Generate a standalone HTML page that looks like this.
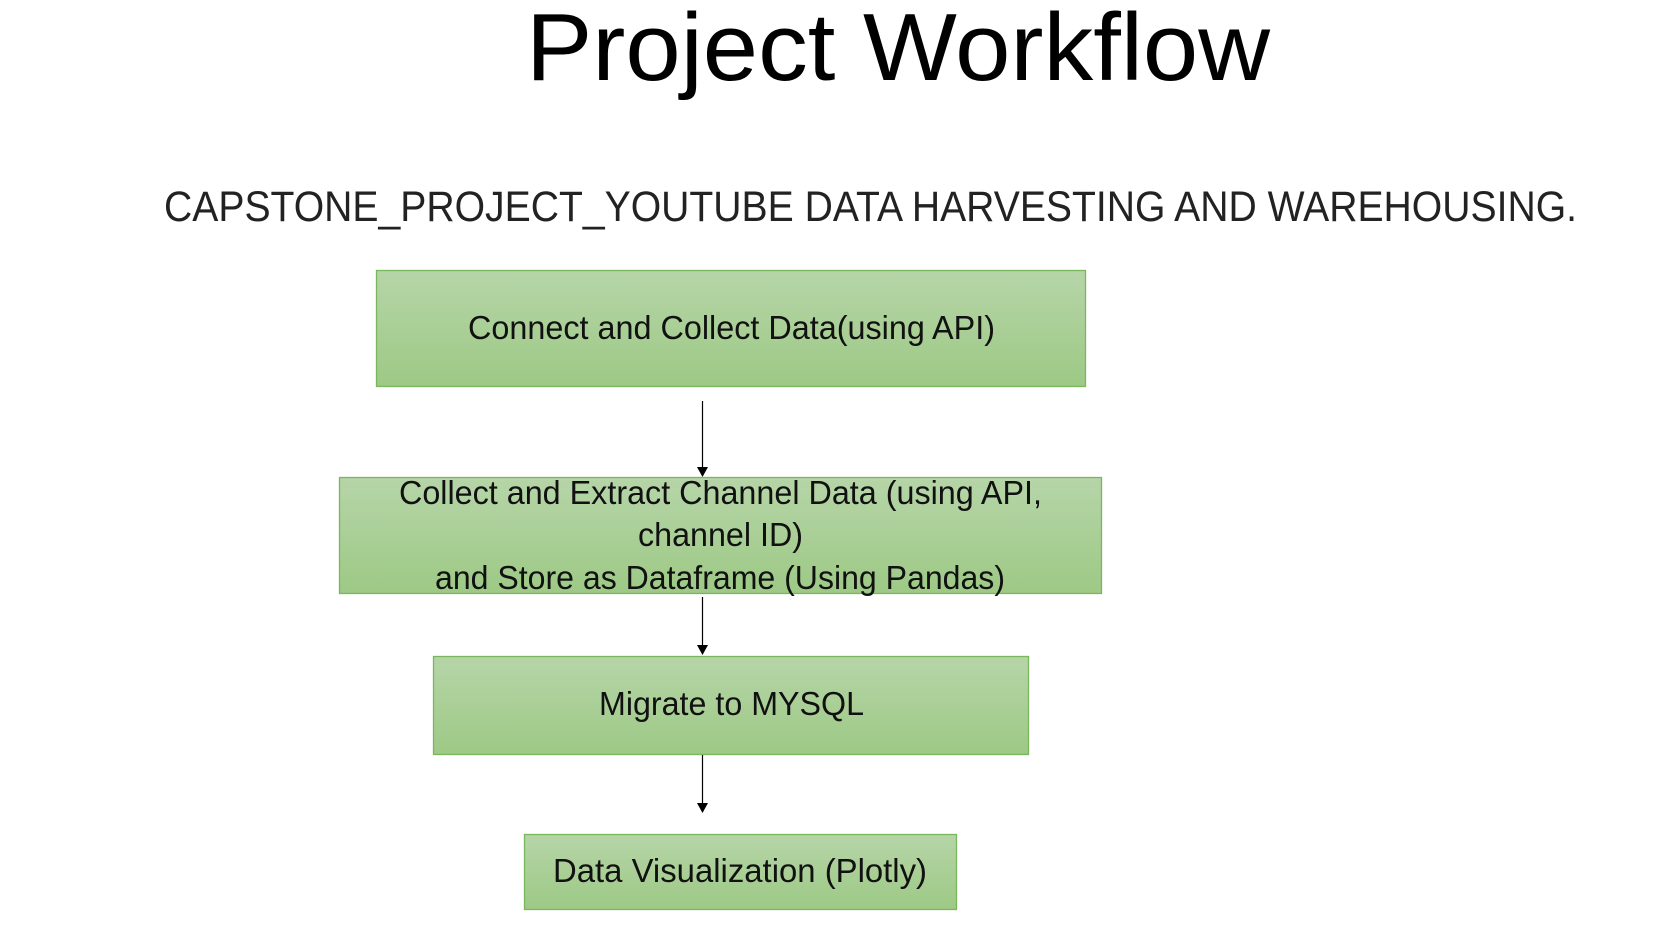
<!DOCTYPE html>
<html><head><meta charset="utf-8"><style>html,body{margin:0;padding:0;background:#fff;width:1677px;height:945px;overflow:hidden}</style></head>
<body>
<svg width="1677" height="945" viewBox="0 0 1677 945" xmlns="http://www.w3.org/2000/svg" font-family="Liberation Sans, sans-serif">
<defs>
<linearGradient id="g" x1="0" y1="0" x2="0" y2="1"><stop offset="0" stop-color="#b6d5a8"/><stop offset="1" stop-color="#9dc985"/></linearGradient>
</defs>
<text x="526" y="80" font-size="96" textLength="744" lengthAdjust="spacingAndGlyphs" fill="#000">Project Workflow</text>
<text x="164" y="221" font-size="43" textLength="1413" lengthAdjust="spacingAndGlyphs" fill="#222">CAPSTONE_PROJECT_YOUTUBE DATA HARVESTING AND WAREHOUSING.</text>
<g fill="url(#g)" stroke="#7ab65c" stroke-width="1.3">
<rect x="376.5" y="270.5" width="709" height="116"/>
<rect x="339.5" y="477.5" width="762" height="116"/>
<rect x="433.5" y="656.5" width="595" height="98"/>
<rect x="524.5" y="834.5" width="432" height="75"/>
</g>
<g stroke="#000" stroke-width="1.2">
<line x1="702.5" y1="401" x2="702.5" y2="468"/>
<line x1="702.5" y1="597" x2="702.5" y2="646"/>
<line x1="702.5" y1="755" x2="702.5" y2="804"/>
</g>
<g fill="#000">
<polygon points="697,467 708,467 702.5,477"/>
<polygon points="697,645 708,645 702.5,655"/>
<polygon points="697,803 708,803 702.5,813"/>
</g>
<g font-size="33" fill="#111">
<text x="468" y="339" textLength="527" lengthAdjust="spacingAndGlyphs">Connect and Collect Data(using API)</text>
<text x="399" y="504" textLength="643" lengthAdjust="spacingAndGlyphs">Collect and Extract Channel Data (using API,</text>
<text x="638" y="546" textLength="165" lengthAdjust="spacingAndGlyphs">channel ID)</text>
<text x="435" y="589" textLength="570" lengthAdjust="spacingAndGlyphs">and Store as Dataframe (Using Pandas)</text>
<text x="599" y="715" textLength="265" lengthAdjust="spacingAndGlyphs">Migrate to MYSQL</text>
<text x="553" y="882" textLength="374" lengthAdjust="spacingAndGlyphs">Data Visualization (Plotly)</text>
</g>
</svg>
</body></html>
